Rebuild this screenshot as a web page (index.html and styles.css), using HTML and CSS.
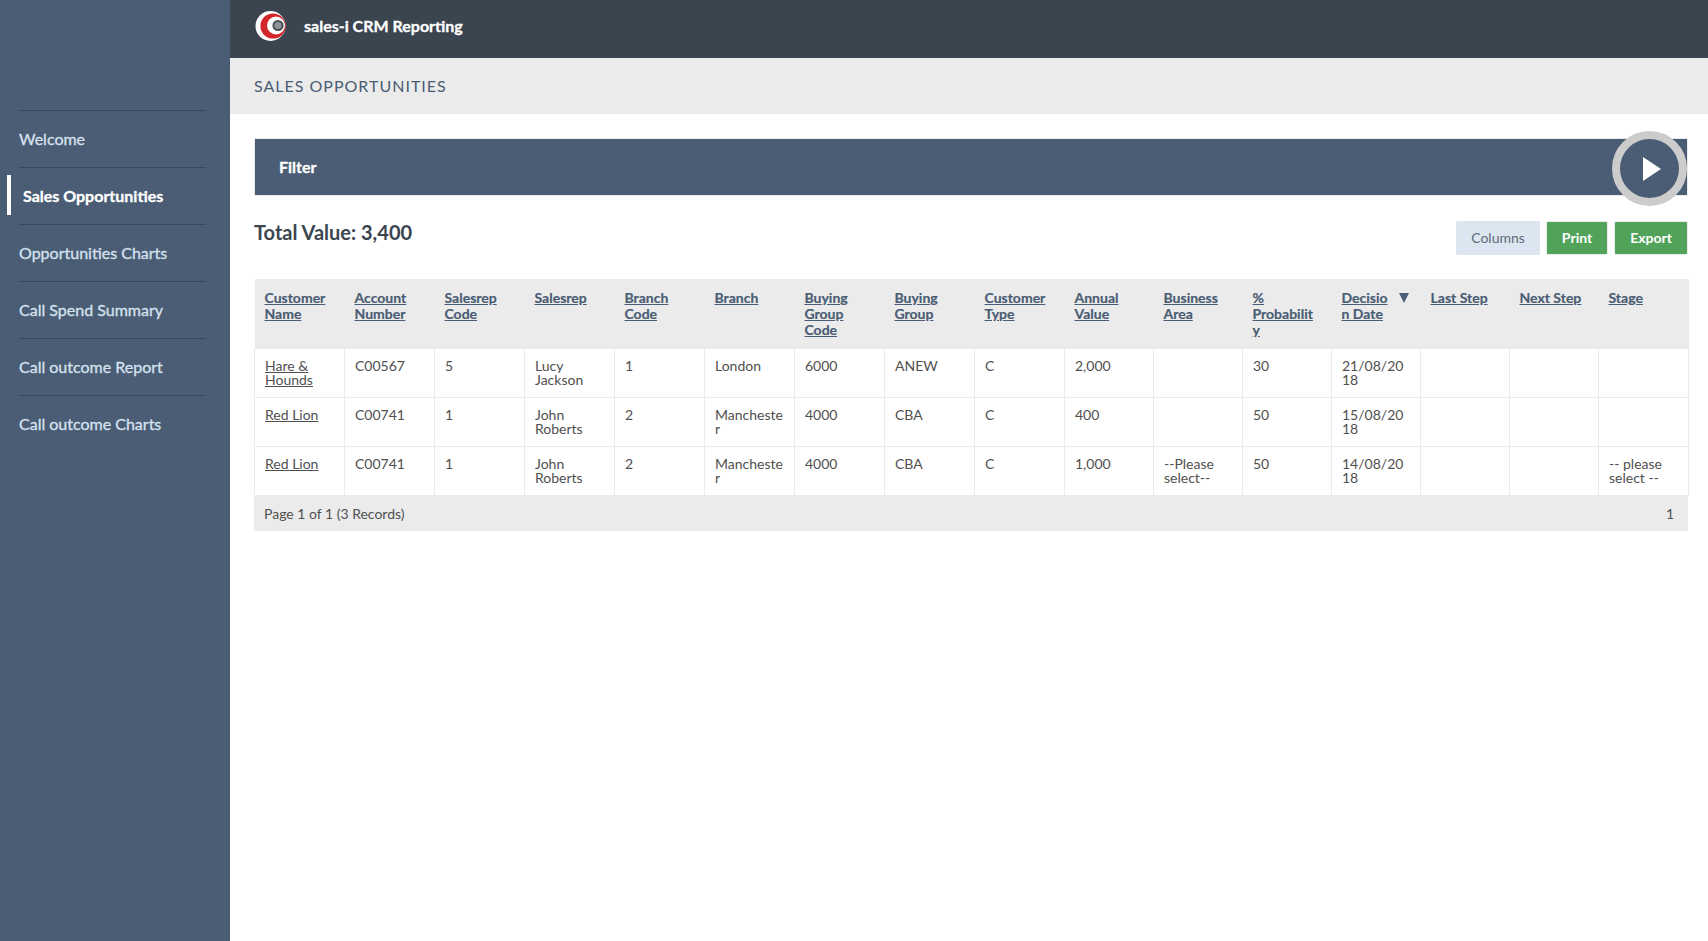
FILE: index.html
```html
<!DOCTYPE html>
<html lang="en">
<head>
    <meta charset="UTF-8">
    <title>sales-i CRM Reporting</title>
    <link rel="stylesheet" href="styles.css">
</head>
<body>
    <aside class="sidebar">
        <nav class="nav">
            <a class="nav-item" href="#">Welcome</a>
            <a class="nav-item active" href="#">Sales Opportunities</a>
            <a class="nav-item" href="#">Opportunities Charts</a>
            <a class="nav-item" href="#">Call Spend Summary</a>
            <a class="nav-item" href="#">Call outcome Report</a>
            <a class="nav-item" href="#">Call outcome Charts</a>
        </nav>
    </aside>

    <div class="main">
        <header class="topbar">
            <svg class="logo" width="32" height="32" viewBox="0 0 32 32">
                <circle cx="15.5" cy="16" r="15" fill="#ffffff"/>
                <circle cx="18" cy="16" r="12.6" fill="#d3262b"/>
                <path d="M27 7.5a12.6 12.6 0 0 1 -6 20.8a13 13 0 0 0 6 -20.8z" fill="#a82024"/>
                <circle cx="21" cy="15.5" r="9" fill="#ffffff"/>
                <circle cx="23" cy="15.5" r="5.6" fill="#4a4f55"/>
                <circle cx="23" cy="15.5" r="3.6" fill="#8f9296"/>
            </svg>
            <span class="brand">sales-i CRM Reporting</span>
        </header>

        <div class="titlebar">SALES OPPORTUNITIES</div>

        <div class="content">
            <div class="filter">
                <span class="filter-label">Filter</span>
                <button class="play" aria-label="Run">
                    <svg width="20" height="26" viewBox="0 0 20 26"><path d="M1 1 L19 13 L1 25 Z" fill="#ffffff"/></svg>
                </button>
            </div>

            <div class="toolbar">
                <div class="total">Total Value: 3,400</div>
                <div class="actions">
                    <button class="btn btn-light">Columns</button>
                    <button class="btn btn-green">Print</button>
                    <button class="btn btn-green">Export</button>
                </div>
            </div>

            <table class="grid">
                <thead>
                    <tr>
                        <th><a href="#">Customer Name</a></th>
                        <th><a href="#">Account Number</a></th>
                        <th><a href="#">Salesrep Code</a></th>
                        <th><a href="#">Salesrep</a></th>
                        <th><a href="#">Branch Code</a></th>
                        <th><a href="#">Branch</a></th>
                        <th><a href="#">Buying Group Code</a></th>
                        <th><a href="#">Buying Group</a></th>
                        <th><a href="#">Customer Type</a></th>
                        <th class="narrow"><a href="#">Annual Value</a></th>
                        <th class="narrow"><a href="#">Business Area</a></th>
                        <th class="narrow prob"><a href="#">% Probability</a></th>
                        <th class="narrow sorted"><a href="#">Decision Date</a><span class="sort-arrow"></span></th>
                        <th class="narrow"><a href="#">Last Step</a></th>
                        <th class="narrow"><a href="#">Next Step</a></th>
                        <th class="last"><a href="#">Stage</a></th>
                    </tr>
                </thead>
                <tbody>
                    <tr>
                        <td><a href="#">Hare &amp; Hounds</a></td>
                        <td>C00567</td>
                        <td>5</td>
                        <td>Lucy Jackson</td>
                        <td>1</td>
                        <td>London</td>
                        <td>6000</td>
                        <td>ANEW</td>
                        <td>C</td>
                        <td>2,000</td>
                        <td></td>
                        <td>30</td>
                        <td>21/08/2018</td>
                        <td></td>
                        <td></td>
                        <td></td>
                    </tr>
                    <tr>
                        <td><a href="#">Red Lion</a></td>
                        <td>C00741</td>
                        <td>1</td>
                        <td>John Roberts</td>
                        <td>2</td>
                        <td>Manchester</td>
                        <td>4000</td>
                        <td>CBA</td>
                        <td>C</td>
                        <td>400</td>
                        <td></td>
                        <td>50</td>
                        <td>15/08/2018</td>
                        <td></td>
                        <td></td>
                        <td></td>
                    </tr>
                    <tr>
                        <td><a href="#">Red Lion</a></td>
                        <td>C00741</td>
                        <td>1</td>
                        <td>John Roberts</td>
                        <td>2</td>
                        <td>Manchester</td>
                        <td>4000</td>
                        <td>CBA</td>
                        <td>C</td>
                        <td>1,000</td>
                        <td>--Please select--</td>
                        <td>50</td>
                        <td>14/08/2018</td>
                        <td></td>
                        <td></td>
                        <td>-- please select --</td>
                    </tr>
                </tbody>
            </table>

            <div class="pager">
                <span>Page 1 of 1 (3 Records)</span>
                <span class="pager-num">1</span>
            </div>
        </div>
    </div>
</body>
</html>
```

FILE: styles.css
```css
* {
    box-sizing: border-box;
}

body {
    display: flex;
    min-height: 100vh;
    margin: 0;
    background-color: #ffffff;
    font-family: Lato, "Open Sans", sans-serif;
    color: #505050;
}

/* Sidebar */
.sidebar {
    flex: 0 0 230px;
    padding: 110px 24px 0 19px;
    background-color: #4a5d74;
}

.nav-item {
    position: relative;
    display: block;
    height: 57px;
    border-top: 1px solid #3d4654;
    font-size: 16px;
    line-height: 56px;
    color: #d6e2f0;
    text-decoration: none;
    -webkit-text-stroke: 0.3px;
}

.nav-item.active {
    padding-left: 4px;
    font-weight: 700;
    color: #ffffff;
}

.nav-item.active::before {
    content: "";
    position: absolute;
    left: -12px;
    top: 7px;
    width: 4px;
    height: 40px;
    background-color: #ffffff;
}

/* Header */
.main {
    flex: 1;
    min-width: 0;
}

.topbar {
    display: flex;
    align-items: center;
    height: 58px;
    padding: 0 0 6px 25px;
    background-color: #3b4550;
}

.logo {
    margin-right: 17px;
}

.brand {
    margin-bottom: 2px;
    font-size: 16px;
    font-weight: 700;
    color: #ffffff;
    -webkit-text-stroke: 0.3px;
}

.titlebar {
    height: 56px;
    padding-left: 24px;
    background-color: #ebebeb;
    font-size: 16px;
    line-height: 56px;
    letter-spacing: 1px;
    color: #4a5d74;
}

.content {
    padding: 24px 20px 0 24px;
}

/* Filter */
.filter {
    position: relative;
    height: 58px;
    padding-left: 24px;
    border: 1px solid #ebebeb;
    background-color: #4a5d74;
    font-size: 16px;
    font-weight: 700;
    line-height: 55px;
    color: #ffffff;
    -webkit-text-stroke: 0.3px;
}

.play {
    position: absolute;
    right: 0;
    top: -8px;
    display: flex;
    align-items: center;
    justify-content: center;
    width: 75px;
    height: 75px;
    padding: 0 0 0 4px;
    border: 8px solid #cccccc;
    border-radius: 50%;
    background-color: #4a5d74;
}

/* Total and buttons */
.toolbar {
    display: flex;
    justify-content: space-between;
    align-items: flex-start;
    margin: 25px 0 24px;
}

.total {
    margin-top: 1px;
    font-size: 20px;
    font-weight: 700;
    line-height: 20px;
    color: #3b4550;
}

.actions {
    display: flex;
    gap: 6px;
}

.btn {
    height: 34px;
    padding: 0 14px 2px;
    border: 1px solid #ebebeb;
    border-radius: 2px;
    font-family: inherit;
    font-size: 14px;
    cursor: pointer;
}

.btn-light {
    border-color: #dce6f1;
    background-color: #dce6f1;
    color: #5f6b78;
}

.btn-green {
    padding: 0 15px 2px;
    background-color: #51a35a;
    font-weight: 700;
    color: #ffffff;
}

/* Table */
.grid {
    width: 100%;
    border-collapse: collapse;
    table-layout: fixed;
    font-size: 14px;
}

.grid th {
    position: relative;
    width: 90px;
    padding: 11px 10px 10px;
    background-color: #ebebeb;
    font-weight: 700;
    line-height: 16px;
    text-align: left;
    vertical-align: top;
    overflow-wrap: break-word;
    -webkit-text-stroke: 0.2px;
}

.grid th.narrow {
    width: 89px;
}

.grid th.last {
    width: 90px;
}

.grid th a {
    color: #4a5d74;
}

.grid th.prob {
    padding-right: 12px;
}

.grid th.sorted {
    padding-right: 30px;
}

.sort-arrow {
    position: absolute;
    right: 12px;
    top: 14px;
    border-left: 5px solid transparent;
    border-right: 5px solid transparent;
    border-top: 10px solid #4a5d74;
}

.grid td {
    height: 49px;
    padding: 10px;
    border: 1px solid #ebebeb;
    line-height: 14px;
    vertical-align: top;
    overflow-wrap: break-word;
}

.grid td a {
    color: #505050;
}

.pager {
    display: flex;
    justify-content: space-between;
    height: 35px;
    padding: 0 14px 0 10px;
    background-color: #ebebeb;
    font-size: 14px;
    line-height: 35px;
}
```
